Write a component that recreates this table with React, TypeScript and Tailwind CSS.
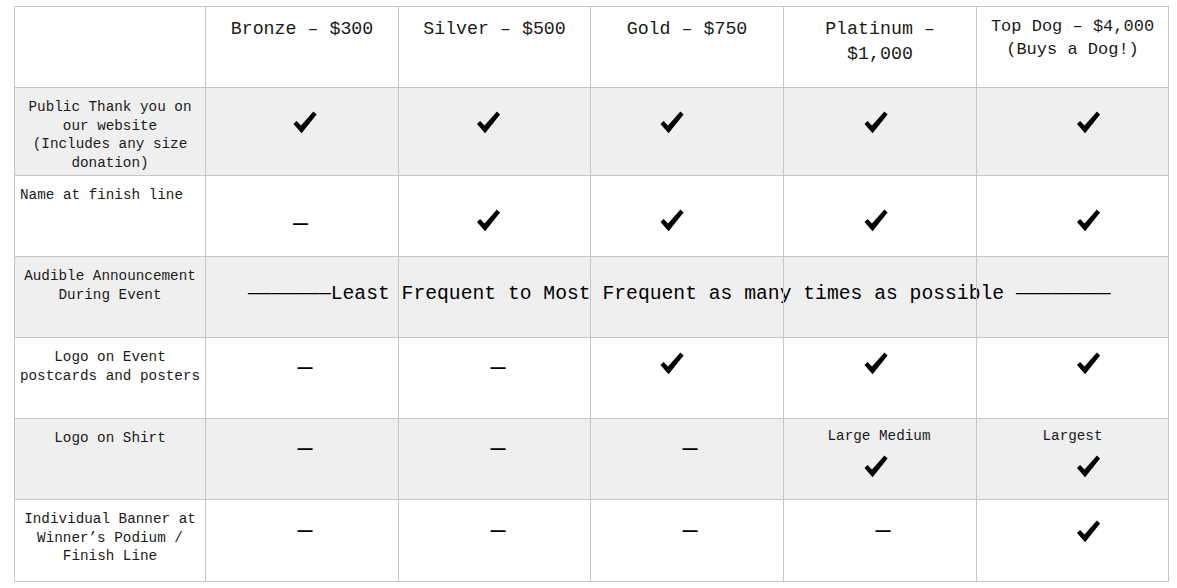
type Mark = {
  kind: "check" | "dash";
  pt: string;
  tx: string;
  note?: string;
  noteTx?: string;
};

const mono = "font-['Liberation_Mono',monospace]";

function Check({ className = "" }: { className?: string }) {
  return (
    <svg viewBox="0 0 24 23" className={`block h-[23px] w-[24px] ${className}`} aria-label="yes">
      <path d="M0.5 13 L3.6 10 L8 14.4 L20.4 0.4 L23.6 3.4 L8.6 22.2 Z" fill="#000" />
    </svg>
  );
}

function Dash({ className = "" }: { className?: string }) {
  return (
    <span
      className={`block text-[25px] leading-[20px] text-black font-['DejaVu_Sans_Mono',monospace] ${className}`}
    >
      —
    </span>
  );
}

const headers = [
  { lines: ["Bronze – $300"], size: "pt-[10px] text-[18.3px] leading-[25px]" },
  { lines: ["Silver – $500"], size: "pt-[10px] text-[18.3px] leading-[25px]" },
  { lines: ["Gold – $750"], size: "pt-[10px] text-[18.3px] leading-[25px]" },
  { lines: ["Platinum –", "$1,000"], size: "pt-[10px] text-[18.3px] leading-[25px]" },
  { lines: ["Top Dog – $4,000", "(Buys a Dog!)"], size: "pt-[9px] text-[17px] leading-[22.5px]" },
];

const rows: {
  label: string[];
  left?: boolean;
  shade: boolean;
  h: string;
  marks?: Mark[];
}[] = [
  {
    label: ["Public Thank you on", "our website", "(Includes any size", "donation)"],
    shade: true,
    h: "h-[88px]",
    marks: [
      { kind: "check", pt: "pt-[23px]", tx: "translate-x-[3px]" },
      { kind: "check", pt: "pt-[23px]", tx: "-translate-x-[6.5px]" },
      { kind: "check", pt: "pt-[23px]", tx: "-translate-x-[15px]" },
      { kind: "check", pt: "pt-[23px]", tx: "-translate-x-[4px]" },
      { kind: "check", pt: "pt-[23px]", tx: "translate-x-[15.5px]" },
    ],
  },
  {
    label: ["Name at finish line"],
    left: true,
    shade: false,
    h: "h-[81px]",
    marks: [
      { kind: "dash", pt: "pt-[37px]", tx: "-translate-x-[1.5px]" },
      { kind: "check", pt: "pt-[33px]", tx: "-translate-x-[6.5px]" },
      { kind: "check", pt: "pt-[33px]", tx: "-translate-x-[15px]" },
      { kind: "check", pt: "pt-[33px]", tx: "-translate-x-[4px]" },
      { kind: "check", pt: "pt-[33px]", tx: "translate-x-[15.5px]" },
    ],
  },
  {
    label: ["Audible Announcement", "During Event"],
    shade: true,
    h: "h-[81px]",
  },
  {
    label: ["Logo on Event", "postcards and posters"],
    shade: false,
    h: "h-[81px]",
    marks: [
      { kind: "dash", pt: "pt-[19px]", tx: "translate-x-[3px]" },
      { kind: "dash", pt: "pt-[19px]", tx: "translate-x-[3.5px]" },
      { kind: "check", pt: "pt-[14px]", tx: "-translate-x-[15px]" },
      { kind: "check", pt: "pt-[14px]", tx: "-translate-x-[4px]" },
      { kind: "check", pt: "pt-[14px]", tx: "translate-x-[15.5px]" },
    ],
  },
  {
    label: ["Logo on Shirt"],
    shade: true,
    h: "h-[81px]",
    marks: [
      { kind: "dash", pt: "pt-[19px]", tx: "translate-x-[3px]" },
      { kind: "dash", pt: "pt-[19px]", tx: "translate-x-[3.5px]" },
      { kind: "dash", pt: "pt-[19px]", tx: "translate-x-[3px]" },
      { kind: "check", pt: "pt-[8px]", tx: "-translate-x-[4px]", note: "Large Medium", noteTx: "-translate-x-[1px]" },
      { kind: "check", pt: "pt-[8px]", tx: "translate-x-[15.5px]", note: "Largest", noteTx: "translate-x-0" },
    ],
  },
  {
    label: ["Individual Banner at", "Winner’s Podium /", "Finish Line"],
    shade: false,
    h: "h-[82px]",
    marks: [
      { kind: "dash", pt: "pt-[20px]", tx: "translate-x-[3px]" },
      { kind: "dash", pt: "pt-[20px]", tx: "translate-x-[3.5px]" },
      { kind: "dash", pt: "pt-[20px]", tx: "translate-x-[3px]" },
      { kind: "dash", pt: "pt-[20px]", tx: "translate-x-[3px]" },
      { kind: "check", pt: "pt-[20px]", tx: "translate-x-[15.5px]" },
    ],
  },
];

const dataCols = ["w-[193px]", "w-[192px]", "w-[193px]", "w-[193px]", "w-[192px]"];

export default function App() {
  return (
    <div className={`min-h-[588px] w-[1177px] bg-white pl-[14px] pt-[6px] text-[#1a1a1a] ${mono}`}>
      <div className="w-[1155px] border-l border-t border-[#c6c6c6]">
        {/* header */}
        <div className="flex h-[81px]">
          <div className="w-[191px] border-b border-r border-[#c6c6c6]" />
          {headers.map((h, i) => (
            <div
              key={i}
              className={`${dataCols[i]} border-b border-r border-[#c6c6c6] text-center ${h.size}`}
            >
              {h.lines.map((l) => (
                <div key={l}>{l}</div>
              ))}
            </div>
          ))}
        </div>

        {rows.map((r, ri) => (
          <div key={ri} className={`flex ${r.h} ${r.shade ? "bg-[#efefef]" : "bg-white"}`}>
            <div
              className={`w-[191px] border-b border-r border-[#c6c6c6] pt-[10px] text-[14.3px] leading-[18.7px] ${
                r.left ? "pl-[5px] text-left" : "text-center"
              }`}
            >
              {r.label.map((l) => (
                <div key={l}>{l}</div>
              ))}
            </div>

            {r.marks ? (
              r.marks.map((m, ci) => (
                <div
                  key={ci}
                  className={`${dataCols[ci]} flex flex-col items-center border-b border-r border-[#c6c6c6] ${m.pt}`}
                >
                  {m.note && (
                    <div className={`text-[14.3px] leading-[18.7px] ${m.noteTx}`}>{m.note}</div>
                  )}
                  {m.kind === "check" ? (
                    <Check className={`${m.tx} ${m.note ? "mt-[9px]" : ""}`} />
                  ) : (
                    <Dash className={m.tx} />
                  )}
                </div>
              ))
            ) : (
              <div className="relative flex">
                <span className="absolute left-[42px] top-[25px] z-0 whitespace-pre text-[19.7px] leading-[24px] text-black">
                  ———————Least Frequent to Most Frequent as many times as possible ————————
                </span>
                {dataCols.map((w, ci) => (
                  <div key={ci} className={`relative z-10 ${w} border-b border-r border-[#c6c6c6]`} />
                ))}
              </div>
            )}
          </div>
        ))}
      </div>
    </div>
  );
}
